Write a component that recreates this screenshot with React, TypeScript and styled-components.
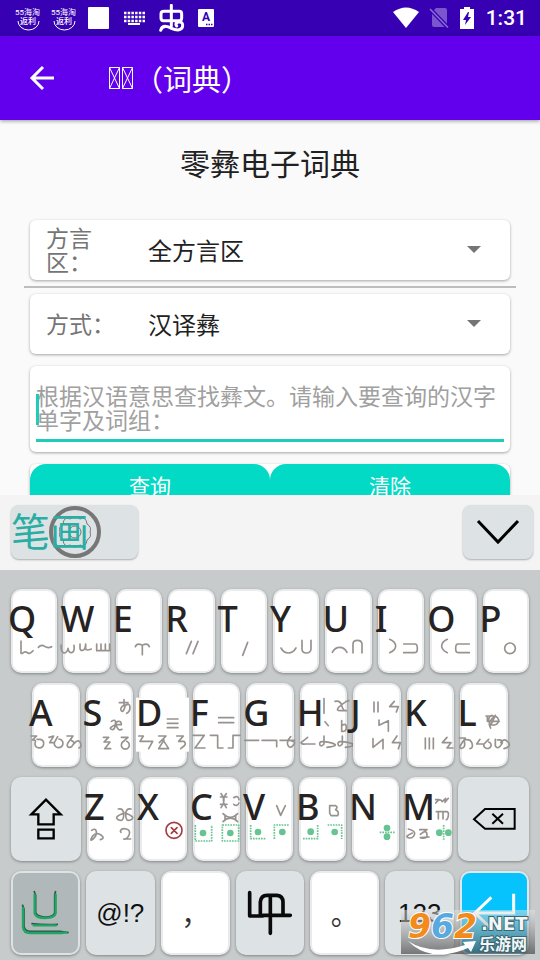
import React from "react";
import styled, { createGlobalStyle } from "styled-components";

const GlobalStyle = createGlobalStyle`
  * { box-sizing: border-box; }
  body { margin: 0; background: #fafafa; font-family: "Noto Sans CJK SC", sans-serif; }
  button, select, textarea { font-family: inherit; border: 0; padding: 0; margin: 0; }
`;

const Screen = styled.div`
  display: flex;
  flex-direction: column;
  height: 100vh;
  position: relative;
  overflow: hidden;
`;

/* ---------- status bar ---------- */
const StatusBar = styled.div`
  display: flex;
  flex: none;
  align-items: center;
  justify-content: space-between;
  height: 36px;
  padding: 0 13px 0 15px;
  background: #3700b3;
  color: #fff;
`;
const StatusGroup = styled.div<{ $gap: number }>`
  display: flex;
  align-items: center;
  gap: ${(p) => p.$gap}px;
`;
const Clock = styled.span`
  font: 500 21px/36px Roboto, sans-serif;
`;

/* ---------- app bar ---------- */
const AppBar = styled.header`
  display: flex;
  flex: none;
  align-items: center;
  height: 84px;
  padding-left: 28px;
  background: #6200ee;
  color: #fff;
  box-shadow: 0 1px 4px rgba(0, 0, 0, 0.4);
  z-index: 1;
`;
const BackButton = styled.button`
  display: flex;
  background: none;
  margin-right: 52px;
`;
const BarTitle = styled.h1`
  display: flex;
  align-items: center;
  margin: 0;
  font-size: 29px;
  font-weight: 400;
  line-height: 36px;
`;

/* ---------- form ---------- */
const Main = styled.main`
  flex: 1;
  min-height: 0;
  overflow: hidden;
  padding: 22px 24px 0;
`;
const Heading = styled.h2`
  margin: 0 0 38px;
  text-align: center;
  font-size: 30px;
  line-height: 40px;
  font-weight: 400;
  color: #212121;
`;
const Card = styled.div<{ $height: number; $gap: number }>`
  display: flex;
  align-items: center;
  min-height: ${(p) => p.$height}px;
  margin: 0 6px ${(p) => p.$gap}px;
  background: #fff;
  border-radius: 6px;
  box-shadow: 0 1px 3px rgba(0, 0, 0, 0.35);
`;
const Divider = styled.hr`
  height: 2px;
  margin: 0 0 6px;
  border: 0;
  background: #bdbdbd;
`;
const FieldLabel = styled.label`
  width: 72px;
  margin: 0 30px 0 16px;
  padding-bottom: 3px;
  font-size: 23px;
  line-height: 24px;
  color: #757575;
`;
const SelectWrap = styled.div`
  display: flex;
  flex: 1;
  align-items: center;
  padding-right: 28px;
`;
const Select = styled.select`
  flex: 1;
  height: 48px;
  padding-bottom: 2px;
  appearance: none;
  background: none;
  font-size: 24px;
  color: #212121;
`;
const InputBox = styled.div`
  position: relative;
  flex: 1;
  margin: 6px 6px 0;
  border-bottom: 3px solid #1dccbb;
`;
const Query = styled.textarea`
  display: block;
  width: 100%;
  height: 56px;
  resize: none;
  overflow: hidden;
  outline: 0;
  background: none;
  font-size: 23px;
  line-height: 24px;
  &::placeholder { color: #a0a0a0; opacity: 1; }
`;
const Caret = styled.span`
  position: absolute;
  left: 0;
  top: 11px;
  width: 3px;
  height: 31px;
  background: #1dccbb;
`;
const ActionButton = styled.button`
  flex: 1;
  height: 46px;
  padding-bottom: 4px;
  border-radius: 16px;
  background: #03dac5;
  color: #fff;
  font-size: 21px;
  line-height: 40px;
`;

/* ---------- keyboard ---------- */
const Keyboard = styled.section`
  flex: none;
  background: #c7cbcc;
`;
const CandidateBar = styled.div`
  display: flex;
  justify-content: space-between;
  padding: 10px 7px 11px 11px;
  background: #f4f4f4;
`;
const CandidateKey = styled.button<{ $width: number; $center?: boolean }>`
  position: relative;
  display: flex;
  align-items: center;
  justify-content: ${(p) => (p.$center ? "center" : "flex-start")};
  width: ${(p) => p.$width}px;
  height: 54px;
  border-radius: 8px;
  background: #dde3e5;
  box-shadow: 0 1px 2px rgba(0, 0, 0, 0.3);
`;
const CandidateText = styled.span`
  position: relative;
  padding-bottom: 6px;
  color: #2aaea4;
  font-size: 39px;
  line-height: 45px;
`;
const Emblem = styled.svg`
  position: absolute;
  left: 37px;
  top: 0;
`;
const Rows = styled.div`
  display: grid;
  gap: 10px;
  padding: 19px 11px 5px;
`;
const Row = styled.div<{ $columns: string; $inset?: number }>`
  display: grid;
  grid-template-columns: ${(p) => p.$columns};
  gap: 6px;
  padding: 0 ${(p) => p.$inset ?? 0}px;
`;
const tones = {
  letter: { bg: "#fff", edge: "#e9ebec" },
  system: { bg: "#dde3e5", edge: "#dde3e5" },
  active: { bg: "#b0b8ba", edge: "#dde3e5" },
  enter: { bg: "#06c3fd", edge: "#dde9ee" },
};
const KeyCap = styled.button<{ $tone: keyof typeof tones }>`
  position: relative;
  display: flex;
  min-width: 0;
  height: 84px;
  align-items: center;
  justify-content: center;
  border: 2px solid ${(p) => tones[p.$tone].edge};
  border-radius: 10px;
  background: ${(p) => tones[p.$tone].bg};
  box-shadow: 0 1px 3px rgba(0, 0, 0, 0.35);
  color: #111;
`;
const LetterCap = styled(KeyCap)`
  align-items: flex-start;
  justify-content: flex-start;
`;
const Letter = styled.span`
  position: relative;
  margin: 4px 0 0 -5px;
  font: 500 36px/48px "Noto Sans", sans-serif;
  color: #262322;
`;
const Symbols = styled.span`
  font: 26px/30px "Liberation Sans", sans-serif;
`;
const Punctuation = styled.span`
  font-size: 28px;
  line-height: 48px;
  color: #333;
`;
const Glyphs = styled.svg`
  position: absolute;
  left: -2px;
  top: -2px;
  overflow: visible;
  fill: none;
  stroke: #98928f;
  stroke-width: 5;
  stroke-linecap: round;
  stroke-linejoin: round;
`;
const Watermark = styled.svg`
  position: absolute;
  right: 5px;
  bottom: 6px;
`;

type Cap = {
  letter: string;
  x: number;
  d?: string;
  dots?: string;
  spots?: [number, number][];
  extra?: React.ReactNode;
};

const topRow: Cap[] = [
  { letter: "Q", x: 33, d: "M63 183V220H67Q75 212 82 218T99 212M115 202Q124 192 134 199T155 200" },
  { letter: "W", x: 189, d: "M183 195C182 225 200 225 204 205C206 225 226 222 222 196M240 192V205Q240 212 248 211Q256 210 257 192V205Q258 214 274 207M290 192V212H330M303 192V212M316 192V212M329 192V212" },
  { letter: "E", x: 346, d: "M404 200Q408 190 418 193L425 196L432 193Q442 190 446 200M425 196V224" },
  { letter: "R", x: 502, d: "M572 184L557 221M592 184L577 221" },
  { letter: "T", x: 658, d: "M738 187L723 226" },
  { letter: "Y", x: 4, d: "M28 204Q36 219 50 219T73 204M91 181V207Q91 219 104 219T118 207V181" },
  { letter: "U", x: 160, d: "M182 217Q190 202 204 202T226 217M244 219V192Q244 181 257 181T271 192V219" },
  { letter: "I", x: 319, d: "M354 178Q372 186 372 198T354 218M396 192H430Q437 192 437 205T430 218H396" },
  { letter: "O", x: 478, d: "M530 178Q513 186 513 198T530 218M596 192H562Q555 192 555 205T562 218H596" },
  { letter: "P", x: 637, d: "M702 205a16 16 0 1 0 32 0a16 16 0 1 0-32 0" },
];
const homeRow: Cap[] = [
  { letter: "A", x: 99, d: "M96 184H113L100 196Q113 194 108 207A13 13 0 1 0 124 194H114M150 188L164 184L152 204H166L176 186M166 204A13 13 0 1 0 180 193M204 184H222L206 206Q202 216 210 218T226 204L216 196M226 206Q238 192 244 204T240 220" },
  { letter: "S", x: 258, d: "M358 84H384M372 75V92Q358 100 364 108T376 92Q390 84 390 98T380 116M334 140Q350 130 346 150Q344 168 334 164T346 150H364Q364 138 354 140T350 156T366 164M310 188H326L312 202H330L314 222H332M364 188H384L366 204M372 200A12 12 0 1 0 380 200" },
  { letter: "D", x: 417, d: "M502 133H534M502 146H534M502 159H534M416 184H430L420 200H458L446 222M476 184H498L478 204M488 194L506 222H476L492 196M530 184H550L536 200H552Q560 208 552 214L542 222", extra: <rect x="408" y="69" width="159" height="162" fill="#fff" stroke="none" /> },
  { letter: "F", x: 576, d: "M653 129H698M653 144H698M576 182H610L582 220H612M628 182H650V220H666M682 220H696V182H717" },
  { letter: "G", x: 736, d: "M732 197H774M784 197H828V216M838 197H882M870 186Q856 200 862 212T878 212T870 198" },
  { letter: "H", x: 85, d: "M157 72V116M190 80Q206 76 210 92T222 108T206 108T224 80L232 78M160 141L170 153M210 138V170Q224 172 224 158T212 152M108 188L88 204Q92 210 100 208H130M157 184V208Q146 220 144 208T176 204T166 218M212 184V208Q201 220 199 208T231 204T221 218" },
  { letter: "J", x: 244, d: "M307 82V112M319 82V112M368 80L354 96H380L374 112M322 136V152L350 138V170M304 192V218L334 194V222M376 184L362 204H386L380 222" },
  { letter: "K", x: 406, d: "M461 190V222M473 190V222M485 190V222M526 188L512 204H538L526 220H544" },
  { letter: "L", x: 568, d: "M646 124H670M650 124V140H686M664 122A15 15 0 1 0 684 136Q678 118 664 132T660 160M674 122L660 152M566 190H584L568 214Q566 224 576 220T580 196Q600 192 604 206T598 222M628 194L618 208H640L654 194M640 208A11 10 0 1 0 654 202M674 194V214Q682 226 692 210T680 196M690 204Q700 188 712 202T700 222" },
];
const bottomRow: Cap[] = [
  { letter: "Z", x: 262, d: "M356 118Q372 114 372 136T356 150T374 130M394 118Q378 114 378 136T394 150T376 130M276 182Q288 174 290 186T280 208T278 200Q290 186 304 196T302 210M362 184Q366 174 380 178T388 196T372 208H393M362 184L364 188" },
  { letter: "X", x: 421, extra: <g stroke="#a63b42"><circle cx="523" cy="182" r="24" /><path d="M515 174L532 191M532 174L515 191" /></g> },
  { letter: "C", x: 580, d: "M664 72Q682 92 664 114M680 72Q662 92 680 114M662 82H682M662 104H682M702 84Q716 76 718 90M702 104Q712 112 718 100M670 132Q692 154 714 132M670 156Q692 134 714 156M676 136V152M708 136V152", dots: "M587 166V214H636V166M668 166H717V214H668Z", spots: [[610, 190], [692, 190]] },
  { letter: "V", x: 739, d: "M831 108L843 137L857 108", dots: "M753 166V207H798M824 208V166H870", spots: [[775, 187], [848, 187]] },
  { letter: "B", x: 88, d: "M180 108H198Q206 112 198 120Q210 126 204 138H184L180 130V108", dots: "M100 207H144V166M174 166H216V208", spots: [[123, 186], [195, 187]] },
  { letter: "N", x: 247, dots: "M330 188H376", spots: [[352, 175], [352, 201]] },
  { letter: "M", x: 406, d: "M498 90H508L498 100Q510 84 518 96L528 86L526 98L536 86M500 126H530Q538 126 536 138T530 150M506 126V148M520 126V148M416 178Q440 184 434 196T416 204T428 190M450 180H472L452 194Q470 178 472 194T452 204L478 202", dots: "M522 166V210", spots: [[509, 189], [536, 189]] },
];

const capTop = { top: 27, home: 25, bottom: 22 };

function LetterKeys({ caps, row }: { caps: Cap[]; row: keyof typeof capTop }) {
  return (
    <>
      {caps.map((c) => (
        <LetterCap key={c.letter} $tone="letter" type="button">
          <Glyphs width="48" height="84" viewBox={`${c.x} ${capTop[row]} 144 252`} aria-hidden="true">
            {c.extra}
            {c.d && <path d={c.d} />}
            {c.dots && <path d={c.dots} stroke="#65c48f" strokeDasharray="5 3" strokeLinecap="butt" />}
            {c.spots?.map(([cx, cy]) => (
              <circle key={`${cx}-${cy}`} cx={cx} cy={cy} r="10" fill="#65c48f" stroke="none" />
            ))}
          </Glyphs>
          <Letter>{c.letter}</Letter>
        </LetterCap>
      ))}
    </>
  );
}

function RebateIcon() {
  return (
    <svg width="26" height="26" viewBox="0 0 26 26" fill="#fff">
      <text x="0" y="10" fontSize="8" fontFamily='Roboto, "Noto Sans CJK SC", sans-serif'>55海淘</text>
      <text x="5" y="19" fontSize="8" fontWeight="500" fontFamily='"Noto Sans CJK SC", sans-serif'>返利</text>
      <path d="M3 16a10.500 9 0 0 0 21 0" fill="none" stroke="#fff" strokeWidth="1" />
    </svg>
  );
}

function Arrow() {
  return (
    <svg width="16" height="8" viewBox="0 0 16 8" aria-hidden="true">
      <path d="M1 0H15L8 7Z" fill="#757575" />
    </svg>
  );
}

export default function App() {
  return (
    <Screen>
      <GlobalStyle />
      <StatusBar>
        <StatusGroup $gap={10}>
          <RebateIcon />
          <RebateIcon />
          <svg width="22" height="22" viewBox="0 0 22 22"><rect x="1" y="0" width="21" height="22" rx="1" fill="#fff" /></svg>
          <svg width="30" height="14" viewBox="0 0 30 14" stroke="#fff" fill="none">
            <path d="M5 2H26M5 6H26M5 10H26" strokeWidth="2.500" strokeDasharray="2.500 1.200" />
            <path d="M9 13H21" strokeWidth="2" />
          </svg>
          <svg width="26" height="28" viewBox="476 12 76 84" fill="none" stroke="#fff" strokeWidth="9" strokeLinecap="round" strokeLinejoin="round">
            <path d="M512 16V78M490 34H536Q543 34 543 42V54Q543 62 536 62H488Q481 62 481 54V42Q481 34 490 34M480 91Q484 76 500 80C512 84 518 90 532 90Q546 88 546 76T532 66Q522 70 528 78" />
          </svg>
          <svg width="20" height="20" viewBox="4 0 20 20">
            <rect x="7" y="1" width="16" height="18" rx="1" fill="#fff" />
            <text x="11" y="13" fontSize="12" fontWeight="700" fontFamily="Roboto, sans-serif" fill="#3700b3">A</text>
            <path d="M15 16.500H22" stroke="#3700b3" strokeWidth="1.500" strokeDasharray="1.500 1" />
          </svg>
        </StatusGroup>
        <StatusGroup $gap={10}>
          <svg width="26" height="22" viewBox="0 0 26 22"><path d="M0 5Q13-4 26 5L13 21Z" fill="#fff" /></svg>
          <svg width="20" height="22" viewBox="0 0 20 22">
            <path d="M7 1H16Q18 1 18 3V18Q18 20 16 20H5Q3 20 3 18V5Z" fill="#7a55cc" />
            <path d="M1 2L19 20.500" stroke="#3700b3" strokeWidth="4" />
            <path d="M1 2L19 20.500" stroke="#8e6dd4" strokeWidth="1.500" />
          </svg>
          <StatusGroup $gap={11}>
            <svg width="16" height="22" viewBox="0 0 16 22">
              <path d="M5 0H11V2H15V22H1V2H5Z" fill="#fff" />
              <path d="M9 5L4 13H7L6 18L12 10H9L10 5Z" fill="#3700b3" />
            </svg>
            <Clock>1:31</Clock>
          </StatusGroup>
        </StatusGroup>
      </StatusBar>

      <AppBar>
        <BackButton type="button" aria-label="返回">
          <svg width="28" height="28" viewBox="0 0 28 28" fill="none" stroke="#fff" strokeWidth="3">
            <path d="M26 14H4M15 3L4 14L15 25" />
          </svg>
        </BackButton>
        <BarTitle>
          <svg width="26" height="24" viewBox="0 0 26 24" fill="none" stroke="#fff" strokeWidth="1" aria-hidden="true">
            <path d="M1.500 1.500H11.500V22.500H1.500ZL11.500 22.500M11.500 1.500L1.500 22.500M14.500 1.500H24.500V22.500H14.500ZL24.500 22.500M24.500 1.500L14.500 22.500" />
          </svg>
          <span>（词典）</span>
        </BarTitle>
      </AppBar>

      <Main>
        <Heading>零彝电子词典</Heading>
        <Card $height={60} $gap={6}>
          <FieldLabel htmlFor="region">方言区：</FieldLabel>
          <SelectWrap>
            <Select id="region"><option>全方言区</option></Select>
            <Arrow />
          </SelectWrap>
        </Card>
        <Divider />
        <Card $height={60} $gap={12}>
          <FieldLabel htmlFor="mode">方式：</FieldLabel>
          <SelectWrap>
            <Select id="mode"><option>汉译彝</option></Select>
            <Arrow />
          </SelectWrap>
        </Card>
        <Card $height={86} $gap={12}>
          <InputBox>
            <Caret />
            <Query aria-label="查询内容" placeholder="根据汉语意思查找彝文。请输入要查询的汉字单字及词组：" />
          </InputBox>
        </Card>
        <Card $height={46} $gap={12}>
          <ActionButton type="button">查询</ActionButton>
          <ActionButton type="button">清除</ActionButton>
        </Card>
      </Main>

      <Keyboard>
        <CandidateBar>
          <CandidateKey $width={127} type="button">
            <Emblem width="54" height="54" viewBox="0 0 54 54" fill="none" aria-hidden="true">
              <circle cx="27" cy="27" r="24" stroke="#777" strokeWidth="4" />
              <circle cx="27" cy="27" r="6" stroke="#777" strokeWidth="1" />
              <path d="M22 14Q27 10 32 14Q38 11 39 19Q44 22 42 27Q44 32 39 35Q38 43 32 40Q27 44 22 40Q16 43 15 35Q10 32 12 27Q10 22 15 19Q16 11 22 14Z" stroke="#777" strokeWidth="1" />
            </Emblem>
            <CandidateText>笔画</CandidateText>
          </CandidateKey>
          <CandidateKey $width={70} $center type="button" aria-label="收起">
            <svg width="44" height="28" viewBox="0 0 44 28" fill="none" stroke="#000" strokeWidth="3">
              <path d="M2 3L22 24L42 3" />
            </svg>
          </CandidateKey>
        </CandidateBar>
        <Rows>
          <Row $columns="repeat(10, 1fr)">
            <LetterKeys caps={topRow} row="top" />
          </Row>
          <Row $columns="repeat(9, 1fr)" $inset={21}>
            <LetterKeys caps={homeRow} row="home" />
          </Row>
          <Row $columns="70px repeat(7, 1fr) 71px">
            <KeyCap $tone="system" type="button" aria-label="上档">
              <svg width="36" height="44" viewBox="84 84 108 130" fill="none" stroke="#000" strokeWidth="7">
                <path d="M138 91L94 135H115V165H161V135H182ZM115 181H161V207H115Z" />
              </svg>
            </KeyCap>
            <LetterKeys caps={bottomRow} row="bottom" />
            <KeyCap $tone="system" type="button" aria-label="删除">
              <svg width="44" height="24" viewBox="604 112 132 72" fill="none" stroke="#000" strokeWidth="6">
                <path d="M610 149L643 118H732V177H643ZM665 132L697 162M697 132L665 162" />
              </svg>
            </KeyCap>
          </Row>
          <Row $columns="repeat(7, 1fr)">
            <KeyCap $tone="active" type="button" aria-label="彝文">
              <svg width="50" height="48" viewBox="60 76 150 140" fill="none" strokeLinejoin="round">
                <path d="M102 80L107 92V145Q112 158 136 158T164 145V92L167 80M94 178Q134 182 174 180M67 121L72 134V185Q74 201 92 201H180L206 205" stroke="#285b46" strokeWidth="5" />
                <path d="M104 88V147Q108 161 136 161T167 147V88M98 183H170M69 128V188Q71 206 90 206H184L202 204" stroke="#20a565" strokeWidth="7" />
              </svg>
            </KeyCap>
            <KeyCap $tone="system" type="button"><Symbols>@!?</Symbols></KeyCap>
            <KeyCap $tone="letter" type="button"><Punctuation>，</Punctuation></KeyCap>
            <KeyCap $tone="system" type="button" aria-label="切换">
              <svg width="46" height="46" viewBox="738 76 138 138" fill="none" stroke="#0a0a0a" strokeWidth="11" strokeLinecap="round" strokeLinejoin="round">
                <path d="M746 84V154H786M778 154V112Q780 92 798 92H828Q846 94 846 112V151M786 152H868M808 92V206" />
              </svg>
            </KeyCap>
            <KeyCap $tone="letter" type="button"><Punctuation>。</Punctuation></KeyCap>
            <KeyCap $tone="system" type="button"><Symbols>123</Symbols></KeyCap>
            <KeyCap $tone="enter" type="button" aria-label="回车">
              <svg width="44" height="44" viewBox="608 82 132 132" fill="none" stroke="#fff" strokeWidth="9">
                <path d="M730 90V148H618M663 101L614 148L663 195" />
              </svg>
            </KeyCap>
          </Row>
        </Rows>
      </Keyboard>

      <Watermark width="134" height="44" viewBox="0 0 134 44">
        <defs>
          <linearGradient id="haze" x1="0" y1="0" x2="0" y2="1">
            <stop offset="0" stopColor="#e6e6e6" stopOpacity="0.500" />
            <stop offset="1" stopColor="#484848" stopOpacity="0.700" />
          </linearGradient>
        </defs>
        <rect width="134" height="44" fill="url(#haze)" />
        <text x="7" y="28" fontFamily='"DejaVu Sans", sans-serif' fontWeight="700" fontStyle="italic" fontSize="33" stroke="#fff" strokeWidth="2" paintOrder="stroke">
          <tspan fill="#f28a1c">9</tspan><tspan fill="#58a9e0">6</tspan><tspan fill="#f28a1c">2</tspan>
        </text>
        <path d="M7 31Q30 46 64 35L62 32L75 31L70 42L67 38Q30 54 7 31Z" fill="#fff" />
        <text x="80" y="20" fontFamily='"DejaVu Sans", sans-serif' fontWeight="700" fontSize="18" fill="#f2f6f7" stroke="#39666f" strokeWidth="2" paintOrder="stroke">.NET</text>
        <text x="78" y="40" fontFamily='"Noto Sans CJK SC", sans-serif' fontWeight="700" fontSize="16" fill="#f2f6f7" stroke="#39666f" strokeWidth="2" paintOrder="stroke">乐游网</text>
      </Watermark>
    </Screen>
  );
}
